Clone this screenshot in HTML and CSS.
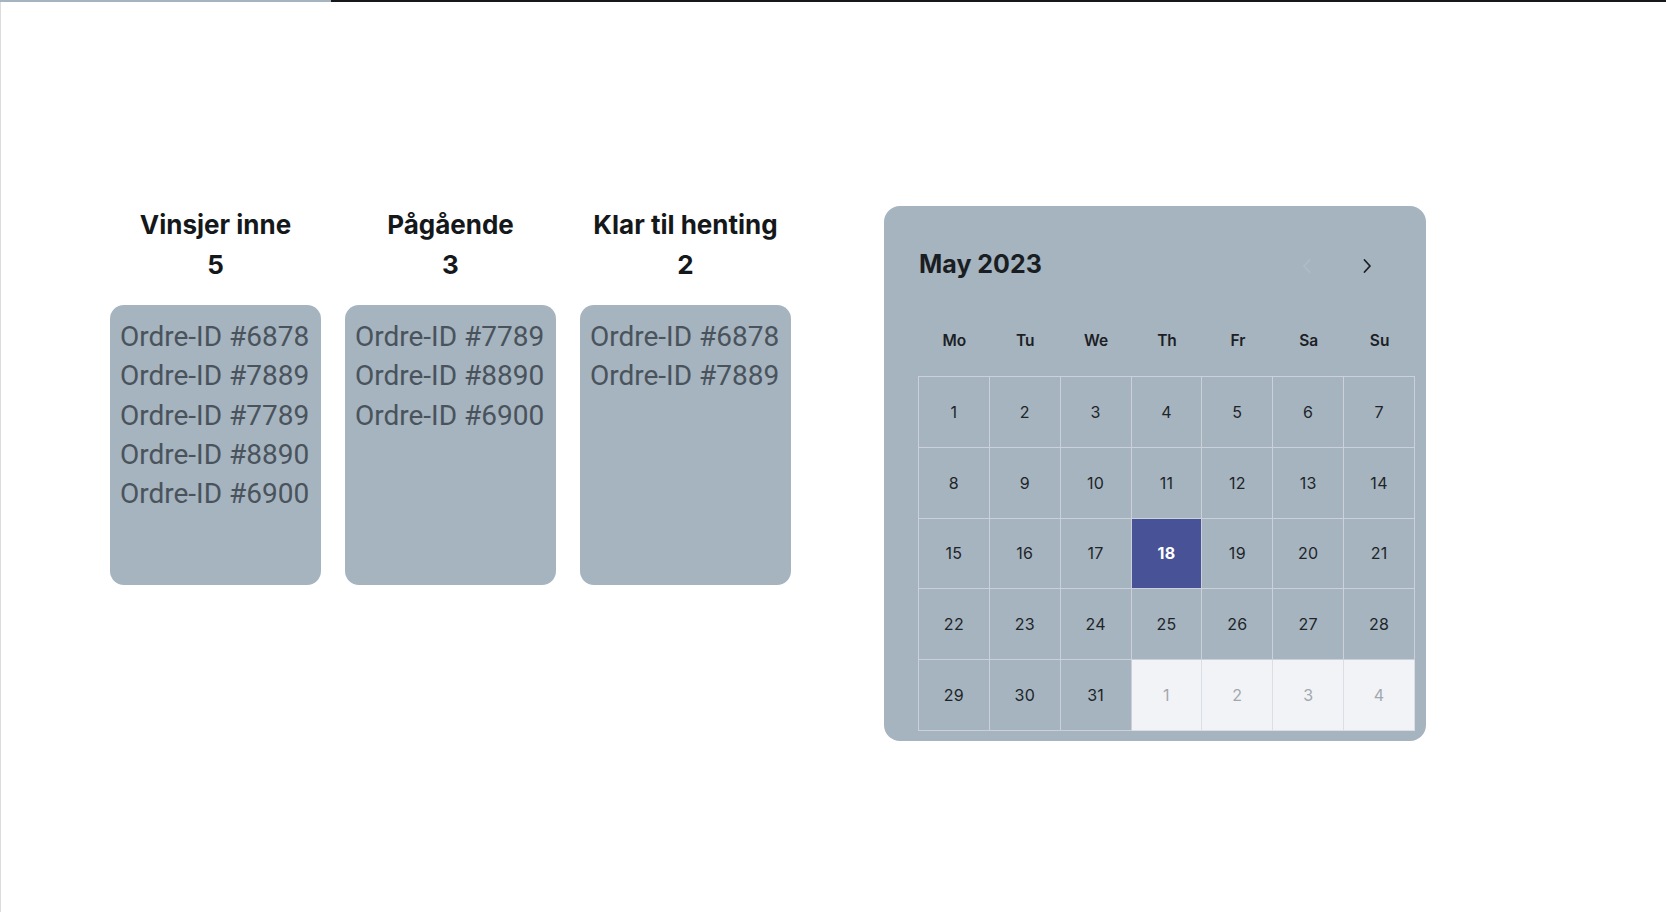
FILE: index.html
```html
<!DOCTYPE html>
<html lang="no">
<head>
<meta charset="utf-8">
<title>Oversikt</title>
<link rel="stylesheet" href="styles.css">
</head>
<body>
<div class="topbar"><div class="topbar-progress"></div><div class="topbar-rest"></div></div>
<main class="page">
  <section class="board">
    <div class="column">
      <h2 class="col-head">Vinsjer inne<br>5</h2>
      <div class="card">
        <p class="order">Ordre-ID #6878</p>
        <p class="order">Ordre-ID #7889</p>
        <p class="order">Ordre-ID #7789</p>
        <p class="order">Ordre-ID #8890</p>
        <p class="order">Ordre-ID #6900</p>
      </div>
    </div>
    <div class="column">
      <h2 class="col-head">Pågående<br>3</h2>
      <div class="card">
        <p class="order">Ordre-ID #7789</p>
        <p class="order">Ordre-ID #8890</p>
        <p class="order">Ordre-ID #6900</p>
      </div>
    </div>
    <div class="column">
      <h2 class="col-head">Klar til henting<br>2</h2>
      <div class="card">
        <p class="order">Ordre-ID #6878</p>
        <p class="order">Ordre-ID #7889</p>
      </div>
    </div>
  </section>

  <section class="calendar">
    <div class="cal-header">
      <div class="cal-title">May 2023</div>
      <div class="cal-nav">
        <button class="nav-btn nav-prev" aria-label="Previous month">
          <svg width="12" height="16" viewBox="0 0 12 16"><polyline points="8.5,2 3,8 8.5,14" fill="none" stroke="currentColor" stroke-width="1.8" stroke-linecap="round" stroke-linejoin="round"/></svg>
        </button>
        <button class="nav-btn nav-next" aria-label="Next month">
          <svg width="12" height="16" viewBox="0 0 12 16"><polyline points="3.5,2 9,8 3.5,14" fill="none" stroke="currentColor" stroke-width="1.8" stroke-linecap="round" stroke-linejoin="round"/></svg>
        </button>
      </div>
    </div>
    <div class="weekdays">
      <div class="wd">Mo</div><div class="wd">Tu</div><div class="wd">We</div><div class="wd">Th</div><div class="wd">Fr</div><div class="wd">Sa</div><div class="wd">Su</div>
    </div>
    <div class="days">
      <div class="day">1</div><div class="day">2</div><div class="day">3</div><div class="day">4</div><div class="day">5</div><div class="day">6</div><div class="day">7</div>
      <div class="day">8</div><div class="day">9</div><div class="day">10</div><div class="day">11</div><div class="day">12</div><div class="day">13</div><div class="day">14</div>
      <div class="day">15</div><div class="day">16</div><div class="day">17</div><div class="day day-selected">18</div><div class="day">19</div><div class="day">20</div><div class="day">21</div>
      <div class="day">22</div><div class="day">23</div><div class="day">24</div><div class="day">25</div><div class="day">26</div><div class="day">27</div><div class="day">28</div>
      <div class="day">29</div><div class="day">30</div><div class="day">31</div><div class="day day-other">1</div><div class="day day-other">2</div><div class="day day-other">3</div><div class="day day-other">4</div>
    </div>
  </section>
</main>
</body>
</html>
```
FILE: styles.css
```css
* { box-sizing: border-box; }

html, body {
  margin: 0;
  padding: 0;
  background: #ffffff;
}

body {
  font-family: Inter, "Noto Sans", sans-serif;
  color: #16191c;
}

.topbar {
  display: flex;
  height: 2px;
}
.topbar-progress {
  width: 331px;
  background: #a5b4bf;
}
.topbar-rest {
  flex: 1;
  background: #15191c;
}

.page {
  height: 910px;
  border-left: 1px solid #dcdcdc;
  padding: 203px 0 0 109px;
  display: flex;
  align-items: flex-start;
}

.board {
  display: flex;
  gap: 24px;
}

.column {
  width: 211px;
  display: flex;
  flex-direction: column;
}

.col-head {
  margin: 0 0 20px;
  text-align: center;
  font-family: Inter, sans-serif;
  font-weight: 700;
  font-size: 26px;
  line-height: 40px;
  color: #15181b;
  white-space: nowrap;
}

.card {
  height: 280px;
  border-radius: 14px;
  background: #a5b4bf;
  padding: 12px 10px;
}

.order {
  margin: 0;
  font-family: Roboto, "Liberation Sans", sans-serif;
  font-size: 28px;
  line-height: 39.3px;
  color: #4a535c;
  white-space: nowrap;
}

.calendar {
  margin-left: 93px;
  margin-top: 1px;
  width: 542px;
  height: 535px;
  border-radius: 16px;
  background: #a5b4bf;
  padding: 38px 12px 10px 34px;
}

.cal-header {
  height: 40px;
  display: flex;
  align-items: center;
  justify-content: space-between;
  margin-bottom: 21px;
}

.cal-title {
  font-family: Inter, sans-serif;
  font-weight: 700;
  font-size: 25px;
  line-height: 40px;
  color: #1a1e22;
  padding-left: 1px;
}

.cal-nav {
  display: flex;
  gap: 20px;
  margin-right: 27px;
  padding-top: 3px;
}

.nav-btn {
  width: 40px;
  height: 40px;
  padding: 0;
  border: 0;
  background: transparent;
  display: flex;
  align-items: center;
  justify-content: center;
}
.nav-prev { color: #b1bbc3; }
.nav-next { color: #1c2024; }

.weekdays {
  display: grid;
  grid-template-columns: repeat(7, 70.86px);
  padding-left: 1px;
  height: 71px;
}
.wd {
  display: flex;
  align-items: center;
  justify-content: center;
  font-weight: 600;
  font-size: 15.5px;
  color: #1c2024;
}

.days {
  display: grid;
  grid-template-columns: repeat(7, 70.86px);
  grid-auto-rows: 70.8px;
  border-top: 1px solid #ccd0da;
  border-left: 1px solid #ccd0da;
  width: 497px;
}
.day {
  display: flex;
  align-items: center;
  justify-content: center;
  border-right: 1px solid #ccd0da;
  border-bottom: 1px solid #ccd0da;
  font-size: 16px;
  letter-spacing: 0.3px;
  color: #1f2429;
}
.day-selected {
  background: #485297;
  color: #ffffff;
  font-weight: 700;
}
.day-other {
  background: #f2f3f6;
  color: #a3a7ae;
  border-color: #dcdee5;
}
```
